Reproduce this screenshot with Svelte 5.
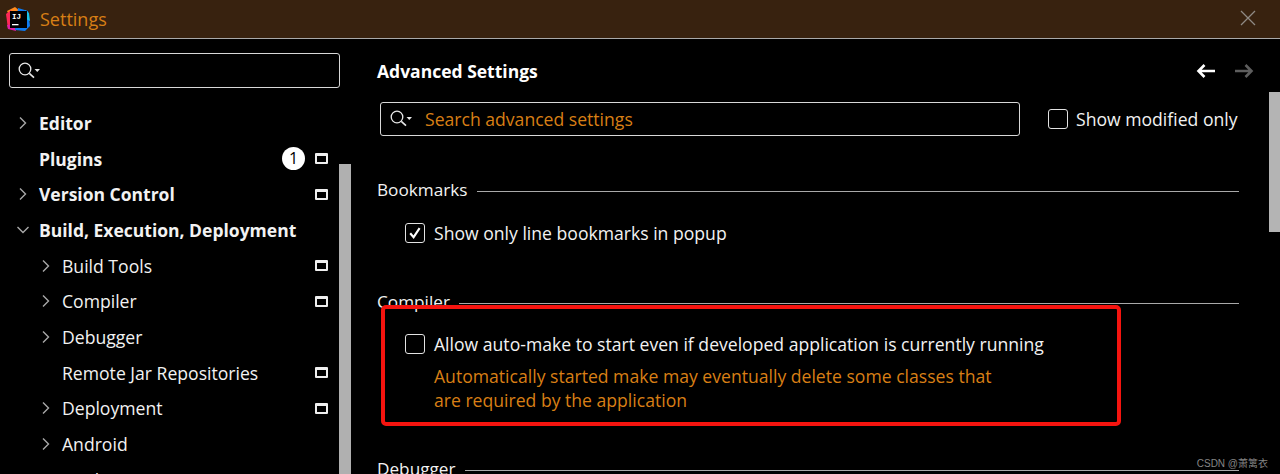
<script>
  const tree = [
    { label: 'Editor', level: 0, arrow: 'right', bold: true },
    { label: 'Plugins', level: 0, bold: true, badge: '1', proj: true },
    { label: 'Version Control', level: 0, arrow: 'right', bold: true, proj: true },
    { label: 'Build, Execution, Deployment', level: 0, arrow: 'down', bold: true },
    { label: 'Build Tools', level: 1, arrow: 'right', proj: true },
    { label: 'Compiler', level: 1, arrow: 'right', proj: true },
    { label: 'Debugger', level: 1, arrow: 'right' },
    { label: 'Remote Jar Repositories', level: 1, proj: true },
    { label: 'Deployment', level: 1, arrow: 'right', proj: true },
    { label: 'Android', level: 1, arrow: 'right' },
    { label: 'Application Servers', level: 1 }
  ];
</script>

{#snippet searchIcon()}
  <svg class="search-icon" width="24" height="20" viewBox="0 0 24 20" fill="none">
    <circle cx="8" cy="8" r="5.8" stroke="#e8e8e8" stroke-width="1.3" />
    <path d="M12.3 12.3 L17 16.6" stroke="#e8e8e8" stroke-width="1.6" />
    <path d="M17.5 8 H23 L20.25 11 Z" fill="#e8e8e8" />
  </svg>
{/snippet}

<div class="window">
  <header class="titlebar">
    <svg class="logo" width="24" height="24" viewBox="0 0 24 24">
      <path d="M1 4 L9 0 L14 4 L5 12 Z" fill="#ff8a1e" />
      <path d="M0 7 L5 3 L7 20 L2 22 Z" fill="#fe2857" />
      <path d="M1 18 L9 17 L10 24 L2 22 Z" fill="#e01fa5" />
      <path d="M12 1 L22 4 L24 19 L19 24 L9 23 Z" fill="#0d7bf2" />
      <path d="M19 3 L23 6 L24 14 L20 12 Z" fill="#19c3e8" />
      <rect x="4" y="4" width="17" height="17" fill="#000" />
      <text x="6" y="11.5" class="logo-text">IJ</text>
      <rect x="6" y="17" width="6.5" height="1.3" fill="#fff" />
    </svg>
    <span class="title">Settings</span>
    <svg class="close" width="16" height="16" viewBox="0 0 16 16">
      <path d="M1 1 L15 15 M15 1 L1 15" stroke="#8f8a84" stroke-width="1.3" />
    </svg>
  </header>

  <div class="body">
    <aside class="sidebar">
      <div class="side-search">{@render searchIcon()}</div>
      <div class="tree-wrap">
        <ul class="tree">
          {#each tree as item}
            <li class="row" class:bold={item.bold} class:nested={item.level === 1}>
              <span class="arrow">
                {#if item.arrow === 'right'}
                  <svg width="10" height="14" viewBox="0 0 10 14"><path d="M2 1.5 L7.5 7 L2 12.5" fill="none" stroke="#a8a8a8" stroke-width="1.4" /></svg>
                {:else if item.arrow === 'down'}
                  <svg width="14" height="10" viewBox="0 0 14 10"><path d="M1.5 2 L7 7.5 L12.5 2" fill="none" stroke="#a8a8a8" stroke-width="1.4" /></svg>
                {/if}
              </span>
              <span class="label">{item.label}</span>
              {#if item.badge}<span class="badge">{item.badge}</span>{/if}
              {#if item.proj}<span class="proj"></span>{/if}
            </li>
          {/each}
        </ul>
        <div class="side-scroll"></div>
      </div>
    </aside>

    <main class="content">
      <div class="head">
        <h1>Advanced Settings</h1>
        <div class="nav">
          <svg width="20" height="16" viewBox="0 0 20 16"><path d="M19 8 H2.5 M8.5 2 L2.5 8 L8.5 14" fill="none" stroke="#fff" stroke-width="2.6" /></svg>
          <svg width="20" height="16" viewBox="0 0 20 16"><path d="M1 8 H17.5 M11.5 2 L17.5 8 L11.5 14" fill="none" stroke="#5e5e5e" stroke-width="2.6" /></svg>
        </div>
      </div>

      <div class="filter">
        <div class="search">
          {@render searchIcon()}
          <span class="placeholder">Search advanced settings</span>
        </div>
        <label class="check top"><span class="box"></span>Show modified only</label>
      </div>

      <div class="sep first"><span>Bookmarks</span><i></i></div>
      <div class="check option">
        <span class="box">
          <svg width="16" height="16" viewBox="0 0 16 16"><path d="M3.2 8.2 L6.6 12.2 L12.6 3.2" fill="none" stroke="#fff" stroke-width="2.1" /></svg>
        </span>
        Show only line bookmarks in popup
      </div>

      <div class="sep compiler"><span>Compiler</span><i></i></div>
      <div class="check option auto">
        <span class="box"></span>
        Allow auto-make to start even if developed application is currently running
      </div>
      <p class="warn">Automatically started make may eventually delete some classes that<br />are required by the application</p>

      <div class="sep debugger"><span>Debugger</span><i></i></div>
    </main>

    <div class="main-scroll"></div>
  </div>

  <div class="annotation"></div>
  <div class="watermark">CSDN @萧篱衣</div>
</div>

<style>
  :global(body) { margin: 0; background: #000; }
  .window {
    position: relative;
    width: 1280px;
    height: 474px;
    overflow: hidden;
    background: #000;
    color: #f2f2f2;
    font-family: "Open Sans", "Noto Sans CJK SC", sans-serif;
    font-size: 17.6px;
  }
  .titlebar {
    display: flex;
    align-items: center;
    height: 38px;
    padding: 0 24px 0 6px;
    background: #38220f;
    border-bottom: 1px solid #a9a9a9;
    box-sizing: content-box;
  }
  .logo { margin-right: 10px; margin-top: -1px; }
  .logo-text { font: 700 7.5px "Liberation Mono", monospace; fill: #fff; }
  .title { color: #d87f15; font-size: 18px; flex: 1; margin-top: -1px; }
  .close { margin-top: -3px; }
  .body { display: flex; height: 435px; }
  .sidebar { width: 352px; flex: none; padding-top: 14px; box-sizing: border-box; }
  .side-search {
    display: flex;
    align-items: center;
    width: 331px;
    height: 35px;
    margin-left: 9px;
    padding-left: 7px;
    box-sizing: border-box;
    border: 1px solid #d8d8d8;
    border-radius: 3px;
  }
  .search-icon { flex: none; }
  .tree-wrap { position: relative; margin-top: 17px; }
  .tree { list-style: none; margin: 0; padding: 0; width: 339px; }
  .row {
    display: flex;
    align-items: center;
    height: 35.7px;
    padding-right: 11px;
    box-sizing: border-box;
  }
  .row.bold { font-weight: 700; font-size: 17.5px; }
  .arrow { display: flex; justify-content: center; align-items: center; width: 14px; margin-left: 16px; margin-right: 9px; }
  .nested .arrow { margin-left: 39px; }
  .label { flex: 1; white-space: nowrap; }
  .badge {
    width: 23px;
    height: 23px;
    border-radius: 50%;
    background: #fff;
    color: #000;
    font-size: 16px;
    font-weight: 400;
    line-height: 23px;
    text-align: center;
    margin-right: 10px;
  }
  .proj {
    width: 13px;
    height: 11px;
    box-sizing: border-box;
    border: 2px solid #efefef;
    border-top-width: 3px;
    border-radius: 1px;
  }
  .side-scroll {
    position: absolute;
    left: 339px;
    top: 59px;
    bottom: -100px;
    width: 12px;
    background: #b0b0b0;
  }
  .content { flex: 1; padding: 0 0 0 25px; min-width: 0; }
  .head {
    display: flex;
    justify-content: space-between;
    align-items: center;
    height: 64px;
    padding-right: 26px;
    box-sizing: border-box;
    margin-bottom: -1px;
  }
  h1 { font-size: 17.5px; font-weight: 700; margin: 0; color: #fff; }
  .nav { display: flex; gap: 18px; }
  .filter { display: flex; align-items: center; padding-left: 3px; height: 34px; }
  .search {
    display: flex;
    align-items: center;
    width: 640px;
    height: 34px;
    padding-left: 8px;
    box-sizing: border-box;
    border: 1px solid #d8d8d8;
    border-radius: 3px;
    margin-right: 28px;
  }
  .placeholder { color: #d87f15; margin-left: 12px; }
  .check { display: flex; align-items: center; white-space: nowrap; }
  .box {
    display: inline-flex;
    align-items: center;
    justify-content: center;
    width: 20px;
    height: 20px;
    margin-right: 9px;
    box-sizing: border-box;
    border: 1px solid #e2e2e2;
    border-radius: 3px;
    flex: none;
  }
  .top .box { margin-right: 8px; }
  .sep { display: flex; align-items: center; gap: 9px; width: 862px; height: 24px; font-size: 17.2px; }
  .sep i { flex: 1; height: 1px; background: #a9a9a9; margin-top: 5px; }
  .sep.first { margin-top: 41px; }
  .sep.compiler { margin-top: 44px; }
  .sep.debugger { margin-top: 44px; }
  .option { margin-left: 28px; height: 24px; }
  .option:not(.auto) { margin-top: 20px; }
  .option.auto { margin-top: 19px; }
  .warn { margin: 8px 0 0 57px; color: #d87f15; line-height: 24px; }
  .main-scroll {
    position: absolute;
    right: 0;
    top: 92px;
    width: 11px;
    height: 140px;
    background: #b4b4b4;
  }
  .annotation {
    position: absolute;
    left: 381px;
    top: 305px;
    width: 740px;
    height: 121px;
    box-sizing: border-box;
    border: 4px solid #f5140f;
    border-radius: 5px;
  }
  .watermark {
    position: absolute;
    right: 12px;
    top: 455px;
    font: 10px "Liberation Sans", "Noto Sans CJK SC", sans-serif;
    color: #858585;
  }
</style>
